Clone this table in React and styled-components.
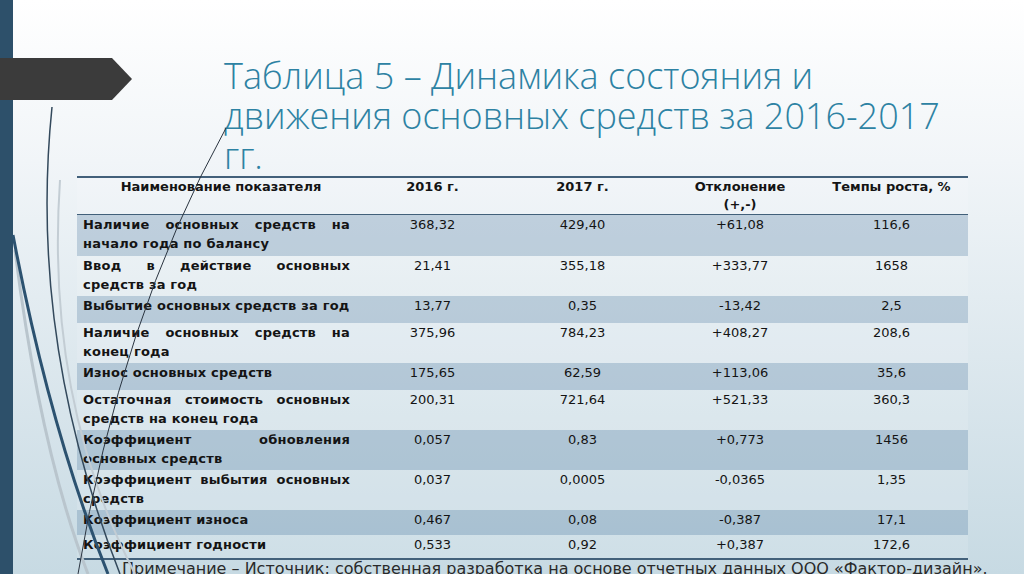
import styled, { createGlobalStyle } from "styled-components";

const GlobalStyle = createGlobalStyle`
  html, body {
    margin: 0;
    padding: 0;
  }
  body {
    font-family: "DejaVu Sans", "Liberation Sans", sans-serif;
  }
`;

const rows = [
  { name: "Наличие основных средств на начало года по балансу", values: ["368,32", "429,40", "+61,08", "116,6"], shaded: true, h: 41 },
  { name: "Ввод в действие основных средств за год", values: ["21,41", "355,18", "+333,77", "1658"], h: 40 },
  { name: "Выбытие основных средств за год", values: ["13,77", "0,35", "-13,42", "2,5"], shaded: true, h: 27 },
  { name: "Наличие основных средств на конец года", values: ["375,96", "784,23", "+408,27", "208,6"], h: 40 },
  { name: "Износ основных средств", values: ["175,65", "62,59", "+113,06", "35,6"], shaded: true, h: 27 },
  { name: "Остаточная стоимость основных средств на конец года", values: ["200,31", "721,64", "+521,33", "360,3"], h: 40 },
  { name: "Коэффициент обновления основных средств", values: ["0,057", "0,83", "+0,773", "1456"], shaded: true, h: 40 },
  { name: "Коэффициент выбытия основных средств", values: ["0,037", "0,0005", "-0,0365", "1,35"], h: 40 },
  { name: "Коэффициент износа", values: ["0,467", "0,08", "-0,387", "17,1"], shaded: true, h: 25 },
  { name: "Коэффициент годности", values: ["0,533", "0,92", "+0,387", "172,6"], h: 24 }
];

const columns = [
  { title: ["Наименование показателя"], width: 288 },
  { title: ["2016 г."], width: 135 },
  { title: ["2017 г."], width: 165 },
  { title: ["Отклонение", "(+,-)"], width: 150 },
  { title: ["Темпы роста, %"], width: 153 }
];

const Slide = styled.div`
  position: relative;
  display: flex;
  width: 1024px;
  height: 574px;
  overflow: hidden;
  background: linear-gradient(180deg, #ffffff 0%, #f1f5f8 28%, #dde8ee 62%, #c7dae3 100%);
`;

const SideBar = styled.div`
  flex: 0 0 13px;
  background: #2d506a;
`;

const Marker = styled.div`
  position: absolute;
  top: 58px;
  left: 0;
  width: 132px;
  height: 42px;
  background: #3b3b3b;
  clip-path: polygon(0 0, 112px 0, 100% 50%, 112px 100%, 0 100%);
`;

const Decor = styled.svg`
  position: absolute;
  inset: 0;
  pointer-events: none;
`;

const Content = styled.div`
  display: flex;
  flex-direction: column;
  padding: 56px 0 0 64px;
`;

const Title = styled.h1`
  margin: 0 0 0 147px;
  width: 720px;
  font-family: "Open Sans", "DejaVu Sans", sans-serif;
  font-weight: 300;
  font-size: 36px;
  line-height: 40px;
  color: #2d82a3;
`;

const Table = styled.table`
  border-collapse: collapse;
  table-layout: fixed;
  width: 891px;
  border-top: 2px solid #42607a;
  border-bottom: 2px solid #42607a;
  font-size: 13px;
  line-height: 19px;
  color: #141414;
`;

const Col = styled.col`
  width: ${(p) => p.$w}px;
`;

const HeadRow = styled.tr`
  height: 36px;
  background: rgba(255, 255, 255, 0.12);
  border-bottom: 1px solid #42607a;
`;

const HeadCell = styled.th`
  padding: 0 6px;
  vertical-align: top;
  text-align: center;
  font-weight: 700;
  line-height: 18px;
`;

const Row = styled.tr`
  height: ${(p) => p.$h}px;
  background: ${(p) => (p.$shaded ? "rgba(90, 130, 165, 0.3)" : "rgba(255, 255, 255, 0.12)")};
`;

const NameCell = styled.td`
  padding: 0 15px 0 6px;
  vertical-align: top;
  text-align: justify;
  font-weight: 700;
  letter-spacing: 0.2px;
`;

const ValueCell = styled.td`
  padding: 0 4px;
  vertical-align: top;
  text-align: center;
`;

const Note = styled.p`
  margin: 0 0 0 45px;
  font-size: 16px;
  line-height: 18px;
  white-space: nowrap;
  color: #2a2a2a;
`;

const App = () => (
  <>
    <GlobalStyle />
    <Slide>
      <SideBar />
      <Content>
        <Title>Таблица 5 – Динамика состояния и движения основных средств за 2016-2017 гг.</Title>
        <Table>
          <colgroup>
            {columns.map((col, i) => (
              <Col key={i} $w={col.width} />
            ))}
          </colgroup>
          <thead>
            <HeadRow>
              {columns.map((col, i) => (
                <HeadCell key={i}>
                  {col.title.map((line, j) => (
                    <div key={j}>{line}</div>
                  ))}
                </HeadCell>
              ))}
            </HeadRow>
          </thead>
          <tbody>
            {rows.map((row) => (
              <Row key={row.name} $h={row.h} $shaded={row.shaded}>
                <NameCell>{row.name}</NameCell>
                {row.values.map((v, i) => (
                  <ValueCell key={i}>{v}</ValueCell>
                ))}
              </Row>
            ))}
          </tbody>
        </Table>
        <Note>Примечание – Источник: собственная разработка на основе отчетных данных ООО «Фактор-дизайн».</Note>
      </Content>
      <Marker />
      <Decor width="1024" height="574" viewBox="0 0 1024 574">
        <path d="M 15 250 Q 40 450 88 574" fill="none" stroke="#b9c5cd" strokeWidth="3" />
        <path d="M 60 180 Q 45 400 135 574" fill="none" stroke="#c3cdd4" strokeWidth="2" />
        <path d="M 13 235 Q 50 430 108 574" fill="none" stroke="#2c5270" strokeWidth="3" />
        <path d="M 52 107 Q 28 340 120 574" fill="none" stroke="#33495c" strokeWidth="1.5" />
        <path d="M 226 128 Q 120 320 78 574" fill="none" stroke="#2a3440" strokeWidth="1" />
      </Decor>
    </Slide>
  </>
);

export default App;
